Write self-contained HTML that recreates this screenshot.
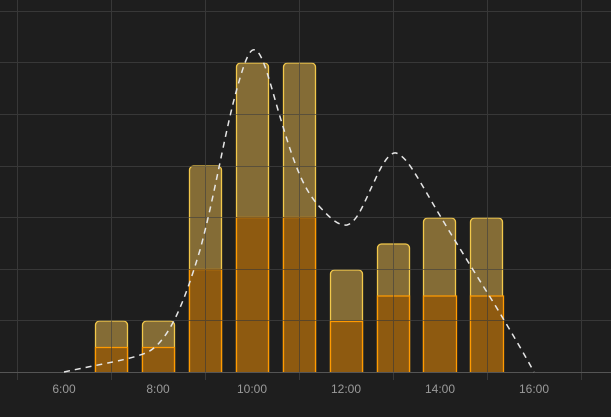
<!DOCTYPE html><html><head><style>body{margin:0;background:#1e1e1e;}svg{display:block}text{font-family:"Liberation Sans",sans-serif;font-size:12px;fill:#9a9a9a}</style></head><body>
<svg width="611" height="417" xmlns="http://www.w3.org/2000/svg">
<rect width="611" height="417" fill="#1e1e1e"/>
<g stroke="#383838" stroke-width="1">
<line x1="0" y1="11.5" x2="611" y2="11.5"/><line x1="0" y1="62.5" x2="611" y2="62.5"/><line x1="0" y1="114.5" x2="611" y2="114.5"/><line x1="0" y1="166.5" x2="611" y2="166.5"/><line x1="0" y1="217.5" x2="611" y2="217.5"/><line x1="0" y1="269.5" x2="611" y2="269.5"/><line x1="0" y1="320.5" x2="611" y2="320.5"/>
<line x1="17.5" y1="0" x2="17.5" y2="380"/><line x1="111.5" y1="0" x2="111.5" y2="380"/><line x1="205.5" y1="0" x2="205.5" y2="380"/><line x1="299.5" y1="0" x2="299.5" y2="380"/><line x1="393.5" y1="0" x2="393.5" y2="380"/><line x1="487.5" y1="0" x2="487.5" y2="380"/><line x1="581.5" y1="0" x2="581.5" y2="380"/>
</g>
<g stroke-width="1.3">
<g fill="rgba(200,160,70,0.6)" stroke="#f2c84b">
<path d="M95.5,372V325a4,4 0 0 1 4-4h24a4,4 0 0 1 4,4V372"/>
<path d="M142.5,372V325a4,4 0 0 1 4-4h24a4,4 0 0 1 4,4V372"/>
<path d="M189.5,372V170a4,4 0 0 1 4-4h24a4,4 0 0 1 4,4V372"/>
<path d="M236.5,372V67a4,4 0 0 1 4-4h24a4,4 0 0 1 4,4V372"/>
<path d="M283.5,372V67a4,4 0 0 1 4-4h24a4,4 0 0 1 4,4V372"/>
<path d="M330.5,372V274a4,4 0 0 1 4-4h24a4,4 0 0 1 4,4V372"/>
<path d="M377.5,372V248a4,4 0 0 1 4-4h24a4,4 0 0 1 4,4V372"/>
<path d="M423.5,372V222a4,4 0 0 1 4-4h24a4,4 0 0 1 4,4V372"/>
<path d="M470.5,372V222a4,4 0 0 1 4-4h24a4,4 0 0 1 4,4V372"/>
</g>
<g fill="#8e5a10" stroke="#ff9a00">
<path d="M95.5,372V347.5h32V372"/>
<path d="M142.5,372V347.5h32V372"/>
<path d="M189.5,372V269.5h32V372"/>
<path d="M236.5,372V217.5h32V372"/>
<path d="M283.5,372V217.5h32V372"/>
<path d="M330.5,372V321.5h32V372"/>
<path d="M377.5,372V296h32V372"/>
<path d="M423.5,372V296h33V372"/>
<path d="M470.5,372V296h33V372"/>
</g>
</g>
<g stroke="#383838" opacity="0.6"><line x1="0" y1="320.5" x2="611" y2="320.5"/><line x1="0" y1="269.5" x2="611" y2="269.5"/><line x1="0" y1="217.5" x2="611" y2="217.5"/><line x1="0" y1="166.5" x2="611" y2="166.5"/><line x1="0" y1="114.5" x2="611" y2="114.5"/><line x1="0" y1="62.5" x2="611" y2="62.5"/><line x1="205.5" y1="0" x2="205.5" y2="372"/><line x1="299.5" y1="0" x2="299.5" y2="372"/><line x1="393.5" y1="0" x2="393.5" y2="372"/><line x1="487.5" y1="0" x2="487.5" y2="372"/><line x1="111.5" y1="0" x2="111.5" y2="372"/></g>
<line x1="0" y1="372.5" x2="611" y2="372.5" stroke="#555"/>
<path d="M64,372 C100,364 130,360 148,352 C170,340 185,300 200,250 C215,195 225,130 238,85 C245,60 250,48 255,50 C262,52 268,75 278,110 C290,150 300,185 318,205 C330,218 338,226 347,225 C358,222 365,200 375,180 C383,162 390,152 396,153 C405,156 412,168 425,190 C445,225 470,265 495,305 C510,330 522,350 534,372" fill="none" stroke="#e6e6e6" stroke-width="1.5" stroke-dasharray="6,5"/>
<text x="64" y="393" text-anchor="middle">6:00</text>
<text x="158" y="393" text-anchor="middle">8:00</text>
<text x="252" y="393" text-anchor="middle">10:00</text>
<text x="346" y="393" text-anchor="middle">12:00</text>
<text x="440" y="393" text-anchor="middle">14:00</text>
<text x="534" y="393" text-anchor="middle">16:00</text>
</svg></body></html>
